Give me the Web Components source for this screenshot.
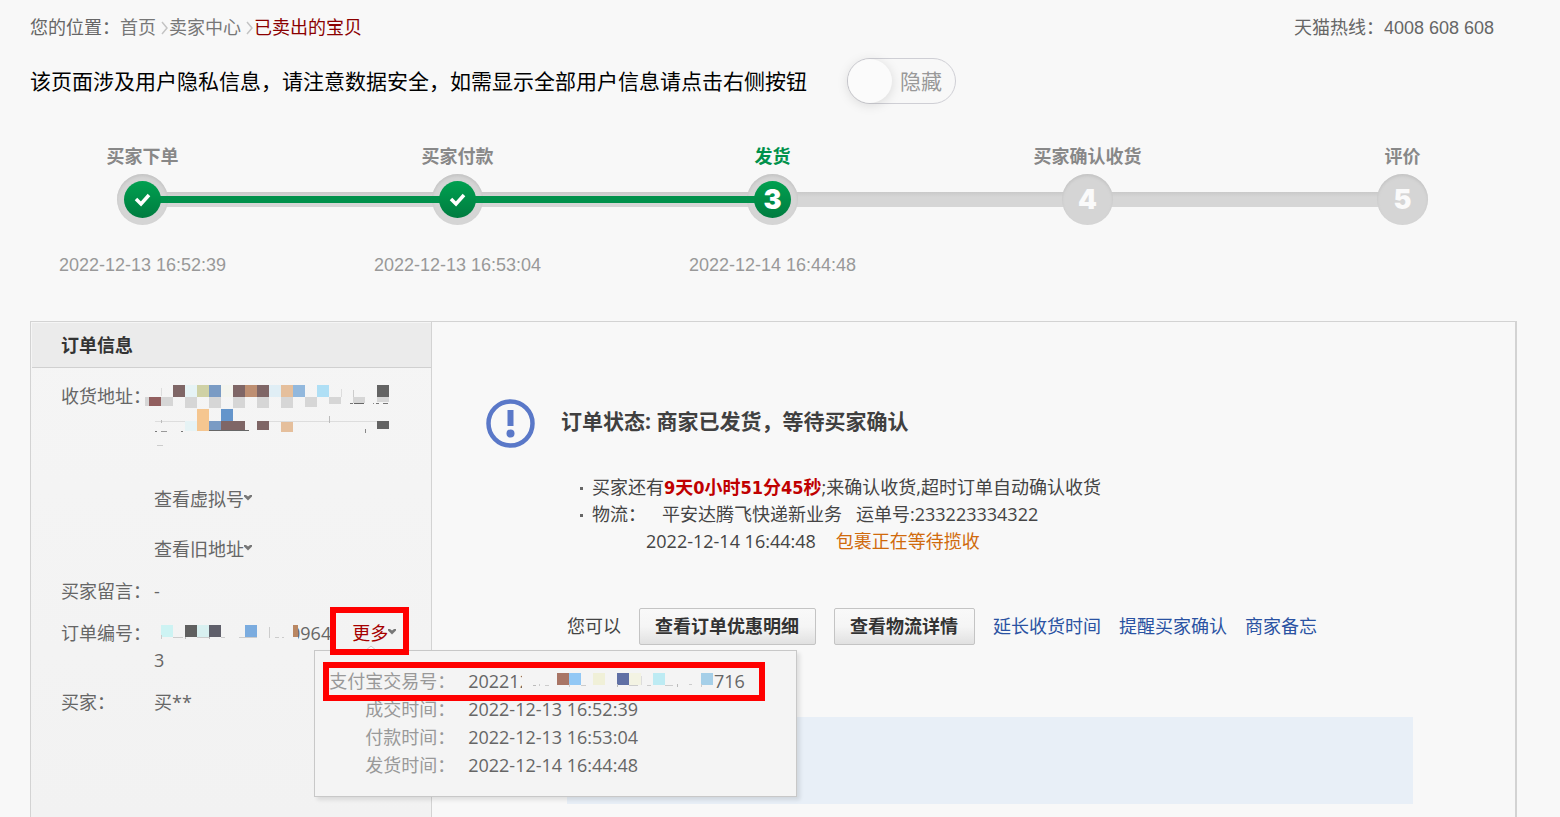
<!DOCTYPE html>
<html lang="zh-CN">
<head>
<meta charset="utf-8">
<title>已卖出的宝贝</title>
<style>
body {
  margin: 0;
  background: #f8f8f8;
  color: #666;
  font: 18px/27px "Open Sans", "Noto Sans CJK SC", sans-serif;
}
</style>
</head>
<body>
<order-page></order-page>

<script>
const define = (name, html, setup) => {
  const template = document.createElement('template');
  template.innerHTML = html;
  customElements.define(name, class extends HTMLElement {
    connectedCallback() {
      if (this.shadowRoot) return;
      const root = this.attachShadow({ mode: 'open' });
      root.append(template.content.cloneNode(true));
      if (setup) setup(this, root);
    }
  });
};

/* Location trail with the service hotline at the right */
define('site-bar', `
<style>
:host { display: flex; justify-content: space-between; padding: 0 66px 0 30px; line-height: 24px;
  font-family: "Liberation Sans", "Noto Sans CJK SC", sans-serif; }
nav { display: flex; align-items: center; }
a { color: #777; text-decoration: none; }
a.here { color: #8b0000; }
svg { width: 7px; height: 14px; margin: 0 1px 0 5px; fill: none; stroke: #c4c4c4; stroke-width: 1.5; }
</style>
<nav aria-label="您的位置"><span>您的位置：</span><a href="#">首页</a>
<svg viewBox="0 0 7 14"><path d="M1 1l5 6-5 6"/></svg><a href="#">卖家中心</a>
<svg viewBox="0 0 7 14"><path d="M1 1l5 6-5 6"/></svg><a class="here" href="#">已卖出的宝贝</a></nav>
<span>天猫热线：4008 608 608</span>`);

/* Privacy notice with its show / hide switch */
define('privacy-switch', `
<style>
:host { display: flex; align-items: center; gap: 40px; padding-left: 30px; font-size: 21px; color: #000; }
label { display: flex; align-items: center; gap: 8px; padding-right: 13px; border: 1px solid #cfcfd5; border-radius: 23px; color: #999; cursor: pointer; }
input { appearance: none; width: 44px; height: 44px; margin: 0; border-radius: 50%; background: #fbfbfb; box-shadow: 0 2px 12px rgba(0,0,0,.13); }
</style>
<span><slot></slot></span>
<label><input type="checkbox" role="switch">隐藏</label>`);

/* One stage of the order: label, marker on the track, time */
define('step-item', `
<style>
:host { display: flex; flex-direction: column; align-items: center; line-height: 24px; }
.label { font-weight: 700; color: #888; }
:host([state="current"]) .label { color: #00914b; }
.track { display: flex; align-items: center; align-self: stretch; margin: 6px 0 28px; }
.bar { flex: 1; height: 15px; background: linear-gradient(#c9c9c9, #d6d6d6 5px); margin: 0 -2px; }
.bar.on { background: linear-gradient(#00914b, #00914b) 0 4px / 100% 7px no-repeat, linear-gradient(#c9c9c9, #d6d6d6 5px); }
.bar.none { background: none; }
.ring { position: relative; display: grid; place-items: center; width: 51px; height: 51px; border-radius: 50%; background: #d5d5d5; box-shadow: inset 0 2px 3px #c4c4c4; color: #fafafa; }
.dot { position: relative; display: grid; place-items: center; width: 37px; height: 37px; border-radius: 50%; font: 900 27px/38px Inter, sans-serif; }
:host([state]) .dot { background: linear-gradient(#00a050, #007c40); color: #fff; }
:host([state]) .ring::before { content: ""; position: absolute; right: 50%; left: 0; height: 7px; background: #00914b; }
:host([state="done"]) .ring::before { right: 0; }
:host([first]) .ring::before { left: 50%; }
svg { width: 17px; height: 14px; fill: none; stroke: #fff; stroke-width: 3.5; }
.time { min-height: 24px; font-family: "Liberation Sans", sans-serif; color: #999; }
</style>
<span class="label"></span>
<div class="track"><i class="bar left"></i><span class="ring"><span class="dot"></span></span><i class="bar right"></i></div>
<time class="time"></time>`, (host, root) => {
  const state = host.getAttribute('state');
  const q = s => root.querySelector(s);
  q('.label').textContent = host.getAttribute('label');
  q('.time').textContent = host.getAttribute('time') || '';
  if (state === 'done') q('.dot').innerHTML = '<svg viewBox="0 0 17 14"><path d="M2 6l5 5 8-9"/></svg>';
  else q('.dot').textContent = host.getAttribute('no');
  q('.left').classList.add(host.hasAttribute('first') ? 'none' : state ? 'on' : 'off');
  q('.right').classList.add(host.hasAttribute('last') ? 'none' : state === 'done' ? 'on' : 'off');
});

define('step-track', `
<style>
:host { display: grid; grid-template-columns: repeat(5, 1fr); margin-left: -15px; }
</style><slot></slot>`);

/* Masked text: coloured cells listed as "x y w h colour", separated by commas */
define('pixel-mask', `
<style>:host { display: block; flex: none; } svg { display: block; }</style>
<svg aria-hidden="true" shape-rendering="crispEdges"></svg>`, (host, root) => {
  const svg = root.querySelector('svg');
  svg.setAttribute('width', host.getAttribute('width'));
  svg.setAttribute('height', host.getAttribute('height'));
  svg.innerHTML = host.getAttribute('cells').split(',').map(c => {
    const [x, y, w, h, fill] = c.trim().split(' ');
    return `<rect x="${x}" y="${y}" width="${w}" height="${h}" fill="${fill}"/>`;
  }).join('');
});

define('info-row', `
<style>
:host { display: flex; }
.label { flex: 0 0 93px; white-space: nowrap; }
.value { flex: 1; min-width: 0; }
</style>
<span class="label"></span><div class="value"><slot></slot></div>`, (host, root) => {
  root.querySelector('.label').textContent = host.getAttribute('label') + '：';
});

/* Text button with a small down caret */
define('drop-link', `
<style>
:host { display: block; }
button { display: flex; align-items: center; padding: 0; border: 0; background: none; font: inherit; color: inherit; white-space: nowrap; cursor: pointer; }
svg { width: 8px; height: 6px; margin-bottom: 3px; fill: #777; }
</style>
<button type="button"><slot></slot><svg viewBox="0 0 8 6"><path d="M0 0h2l2 1.500 2-1.500h2v1.500L4 5.500 0 1.500z"/></svg></button>`);

/* Trade details opened under the "more" link */
define('trade-popover', `
<style>
:host { position: relative; display: block; color: #a60000; }
.panel { position: absolute; top: 30px; left: -38px; z-index: 2; box-sizing: border-box; width: 483px; padding: 16px 38px 17px 14px;
  border: 1px solid #c8c8c8; background: #f4f4f4; box-shadow: 3px 3px 4px rgba(0,0,0,.1); color: #666; line-height: 28px; }
.notch { position: absolute; top: -6px; left: 50px; width: 12px; height: 6px; fill: #f8f8f8; stroke: #c8c8c8; }
dl { margin: 0; }
dl div { display: flex; gap: 13px; position: relative; }
dt { flex: 0 0 126px; text-align: right; color: #999; }
dd { display: flex; margin: 0; white-space: nowrap; }
.mark { position: absolute; z-index: 3; border: 6px solid #f00; pointer-events: none; }
.mark.link { inset: -13px -13px -8px -22px; }
.mark.row { inset: -5px -7px -6px -6px; }
pixel-mask { position: relative; margin-left: -8px; }
</style>
<drop-link>更多</drop-link>
<div class="panel">
<svg class="notch" viewBox="0 0 12 6"><path d="M0 6l6-5 6 5"/></svg>
<dl>
<div><dt>支付宝交易号：</dt><dd><span>202212</span><pixel-mask width="192" height="28" cells="0 0 10 28 #f4f4f4,35 6 12 12 #a87565,47 6 12 12 #92c8f5,71 6 12 12 #f0f0d8,95 6 12 12 #6070a5,107 6 12 12 #f3f3e3,131 6 12 12 #bdebf3,179 6 12 12 #a5cfe8,11 18 3 1 #bbb,17 17 1 2 #ccc,23 18 4 1 #ccc,47 17 1 3 #ccc,59 18 5 1 #ccc,95 17 1 3 #bbb,107 18 9 1 #ccc,119 9 1 9 #ddd,125 18 4 1 #ccc,143 18 8 1 #ccc,155 17 1 3 #bbb,167 17 3 1 #ccc,179 17 1 3 #ccc"></pixel-mask><span>716</span></dd><i class="mark row"></i></div>
<div><dt>成交时间：</dt><dd>2022-12-13 16:52:39</dd></div>
<div><dt>付款时间：</dt><dd>2022-12-13 16:53:04</dd></div>
<div><dt>发货时间：</dt><dd>2022-12-14 16:44:48</dd></div>
</dl></div>
<i class="mark link"></i>`);

define('order-info', `
<style>
:host { display: block; border-right: 1px solid #d3d3d3; background: linear-gradient(#f5f5f5, #f2f2f2); }
h2 { margin: 1px 0 0 1px; padding: 9px 29px; border-bottom: 1px solid #d0d0d0; background: #ebebeb; font-size: 18px; line-height: 26px; color: #333; }
.rows { display: flex; flex-direction: column; gap: 15px; padding: 15px 0 15px 30px; }
.address { margin-left: -9px; }
.links { display: grid; gap: 23px; margin-top: 22px; }
.number { display: flex; }
.number pixel-mask { position: relative; margin-right: -8px; }
trade-popover { margin-left: 21px; }
</style>
<h2>订单信息</h2>
<div class="rows">
<info-row label="收货地址">
<pixel-mask class="address" width="250" height="81" cells="28 2 12 12 #7f6666,40 2 12 12 #e6f3f5,52 2 12 12 #cfd1a5,64 2 12 12 #7a9bc4,76 2 12 12 #f3f4ee,88 2 12 12 #7f6666,100 2 12 12 #be8f72,112 2 12 12 #7f6666,124 2 12 12 #e0eef5,136 2 12 12 #e5bf9c,148 2 12 12 #92b8dd,172 2 12 12 #afdff5,232 2 12 12 #636363,0 14 4 9 #d6d6d6,4 14 12 9 #925f5f,16 14 12 9 #d6d6d6,40 14 12 11 #d6d6d6,64 14 12 11 #d6d6d6,88 14 12 11 #d6d6d6,112 14 12 11 #d6d6d6,136 14 12 11 #d6d6d6,160 14 12 10 #d6d6d6,184 14 12 7 #d6d6d6,208 14 12 6 #d6d6d6,232 14 12 5 #d6d6d6,205 20 3 1 #777,209 20 10 1 #666,228 20 1 1 #888,231 20 3 1 #777,238 20 5 1 #777,196 6 1 8 #ddd,208 7 1 7 #ccc,16 5 1 8 #ddd,52 26 12 22 #f5c690,76 26 12 12 #6495cb,40 38 12 10 #e6f3f5,64 38 12 9 #7a9bc4,76 38 12 9 #7f6666,88 38 12 9 #7f6666,112 38 12 9 #7f6666,136 38 12 11 #e5bf9c,232 38 12 8 #636363,10 38 30 1 #ddd,124 38 108 1 #ddd,16 37 1 3 #bbb,184 33 1 7 #bbb,10 48 2 1 #777,16 48 6 1 #999,36 48 2 1 #777,64 47 40 1 #666,220 46 1 4 #888,12 62 6 1 #ccc"></pixel-mask>
<div class="links"><drop-link>查看虚拟号</drop-link><drop-link>查看旧地址</drop-link></div>
</info-row>
<info-row label="买家留言">-</info-row>
<info-row label="订单编号"><div class="number"><pixel-mask width="144" height="27" cells="134 0 10 27 #f3f3f3,7 5 12 12 #cdf3f3,31 5 12 12 #606060,43 5 12 12 #d8f0f0,55 5 12 12 #60606b,91 5 12 12 #7bacdf,139 5 5 12 #b98763,7 15 1 4 #ccc,19 17 10 1 #ccc,31 17 1 2 #bbb,43 17 12 1 #ccc,55 17 1 2 #bbb,67 17 4 1 #ccc,85 17 18 1 #ccc,115 7 1 11 #ccc,121 17 4 1 #ccc,128 17 2 1 #ccc"></pixel-mask><span>0964</span><trade-popover></trade-popover></div>3</info-row>
<info-row label="买家">买**</info-row>
</div>`);

define('order-status', `
<style>
:host { display: block; padding: 77px 102px 13px 54px; color: #444; }
header { display: flex; align-items: center; gap: 26px; }
header svg { width: 49px; height: 49px; }
h1 { margin: 0 0 5px; font-size: 21px; line-height: 30px; color: #404040; }
ul { margin: 26px 0 53px 94px; padding: 0; list-style: none; }
li { display: grid; grid-template-columns: 3px 1fr; column-gap: 9px; }
li::before { content: ""; width: 3px; height: 3px; margin-top: 13px; background: #666; }
b { font-family: "DejaVu Sans Condensed", "Open Sans", "Noto Sans CJK SC", sans-serif; color: #c00000; }
.ship { display: grid; grid-template-columns: 54px 1fr; }
.ship .line { display: flex; gap: 14px; padding-left: 16px; }
.ship .event { display: flex; grid-column: 2; gap: 20px; }
.event span { color: #d06a0c; }
.actions { display: flex; align-items: center; gap: 18px; margin-left: 81px; }
button { padding: 0 16px 0 15px; border: 1px solid #c4c4c4; border-radius: 2px; background: linear-gradient(#f9f9f9, #f5f5f5 50%, #e1e1e1); font: inherit; font-weight: 700; line-height: 35px; color: #333; }
a { color: #2a52a2; text-decoration: none; }
.note { min-height: 87px; margin: 72px 0 0 81px; background: #e8eff7; }
</style>
<header><svg viewBox="0 0 49 49"><circle cx="24.500" cy="24.500" r="22" fill="none" stroke="#5a78c8" stroke-width="4.500"/><rect x="21.500" y="11" width="6" height="16" fill="#5a78c8"/><circle cx="24.500" cy="34.500" r="4" fill="#5a78c8"/></svg><h1>订单状态: 商家已发货，等待买家确认</h1></header>
<ul>
<li><span>买家还有<b>9天0小时51分45秒</b>;来确认收货,超时订单自动确认收货</span></li>
<li><div class="ship"><span>物流：</span><div class="line"><span>平安达腾飞快递新业务</span><span>运单号:233223334322</span></div><div class="event"><time>2022-12-14 16:44:48</time><span>包裹正在等待揽收</span></div></div></li>
</ul>
<div class="actions"><span>您可以</span><button type="button">查看订单优惠明细</button><button type="button">查看物流详情</button><a href="#">延长收货时间</a><a href="#">提醒买家确认</a><a href="#">商家备忘</a></div>
<div class="note"></div>`);

define('order-page', `
<style>
:host { display: flex; flex-direction: column; box-sizing: border-box; min-height: 100vh; padding-top: 16px; overflow: hidden; }
privacy-switch { margin: 18px 0 40px; }
.order { display: grid; grid-template-columns: 401px 1fr; flex: 1; margin: 44px 43px 0 30px; border: solid #d3d3d3; border-width: 1px 2px 0 1px; }
</style>
<site-bar></site-bar>
<privacy-switch>该页面涉及用户隐私信息，请注意数据安全，如需显示全部用户信息请点击右侧按钮</privacy-switch>
<step-track>
<step-item no="1" label="买家下单" time="2022-12-13 16:52:39" state="done" first></step-item>
<step-item no="2" label="买家付款" time="2022-12-13 16:53:04" state="done"></step-item>
<step-item no="3" label="发货" time="2022-12-14 16:44:48" state="current"></step-item>
<step-item no="4" label="买家确认收货"></step-item>
<step-item no="5" label="评价" last></step-item>
</step-track>
<section class="order"><order-info></order-info><order-status></order-status></section>`);
</script>
</body>
</html>
